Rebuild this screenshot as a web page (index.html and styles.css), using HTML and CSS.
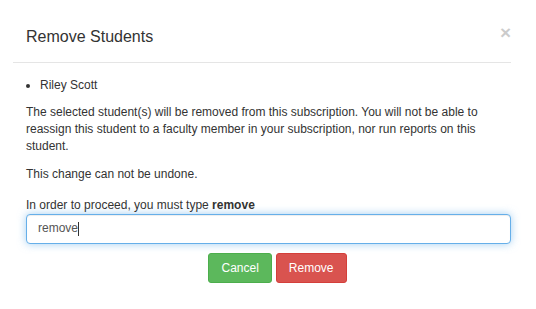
FILE: index.html
```html
<!DOCTYPE html>
<html>
<head>
<meta charset="utf-8">
<title>Remove Students</title>
<link rel="stylesheet" href="styles.css">
</head>
<body>
<div class="modal">
  <div class="modal-header">
    <h4 class="modal-title">Remove Students</h4>
    <button class="close" type="button">×</button>
  </div>
  <div class="modal-body">
    <ul class="students">
      <li>Riley Scott</li>
    </ul>
    <p>The selected student(s) will be removed from this subscription. You will not be able to reassign this student to a faculty member in your subscription, nor run reports on this student.</p>
    <p class="warning">This change can not be undone.</p>
    <label class="confirm-label">In order to proceed, you must type <b>remove</b></label>
    <div class="confirm-input">remove<span class="caret"></span></div>
    <div class="actions">
      <button class="btn btn-success" type="button">Cancel</button>
      <button class="btn btn-danger" type="button">Remove</button>
    </div>
  </div>
</div>
</body>
</html>
```

FILE: styles.css
```css
html, body {
  margin: 0;
  padding: 0;
  background: #fff;
}

body {
  font-family: "Liberation Sans", Arial, sans-serif;
  font-size: 12px;
  line-height: 1.42857;
  color: #333;
}

.modal {
  width: 536px;
  height: 309px;
  box-sizing: border-box;
  background: #fff;
}

.modal-header {
  display: flex;
  justify-content: space-between;
  align-items: flex-start;
  margin: 0 25px 0 13px;
  padding: 28px 0 16px 13px;
  border-bottom: 1px solid #e5e5e5;
}

.modal-title {
  margin: 0;
  font-size: 16px;
  font-weight: normal;
  line-height: 18px;
  color: #333;
}

.close {
  margin: -5px 0 0 0;
  padding: 0;
  border: 0;
  background: transparent;
  font-family: "Liberation Sans", Arial, sans-serif;
  font-size: 19px;
  font-weight: bold;
  line-height: 1;
  color: #000;
  opacity: 0.2;
  cursor: pointer;
}

.modal-body {
  padding: 14px 25px 0 26px;
}

.students {
  margin: 0 0 10px 0;
  padding-left: 14px;
}

.modal-body p {
  margin: 0 0 10px 0;
}

.modal-body .warning {
  margin-bottom: 14px;
}

.confirm-label {
  display: block;
  margin: 0;
}

.confirm-label b {
  font-weight: bold;
}

.confirm-input {
  display: flex;
  align-items: center;
  box-sizing: border-box;
  height: 30px;
  padding: 0 11px;
  border: 1px solid #66afe9;
  border-radius: 4px;
  box-shadow: inset 0 1px 1px rgba(0, 0, 0, 0.075), 0 0 8px rgba(102, 175, 233, 0.6);
  font-size: 12px;
  color: #555;
  background: #fff;
}

.caret {
  display: inline-block;
  width: 1px;
  height: 14px;
  background: #333;
}

.actions {
  display: flex;
  justify-content: center;
  gap: 4px;
  margin-top: 9px;
  padding-left: 18px;
}

.btn {
  box-sizing: border-box;
  height: 30px;
  padding: 5px 12px;
  border: 1px solid transparent;
  border-radius: 3px;
  font-family: "Liberation Sans", Arial, sans-serif;
  font-size: 12px;
  line-height: 18px;
  color: #fff;
  cursor: pointer;
}

.btn-success {
  background: #5cb85c;
  border-color: #4cae4c;
}

.btn-danger {
  background: #d9534f;
  border-color: #d43f3a;
}
```
